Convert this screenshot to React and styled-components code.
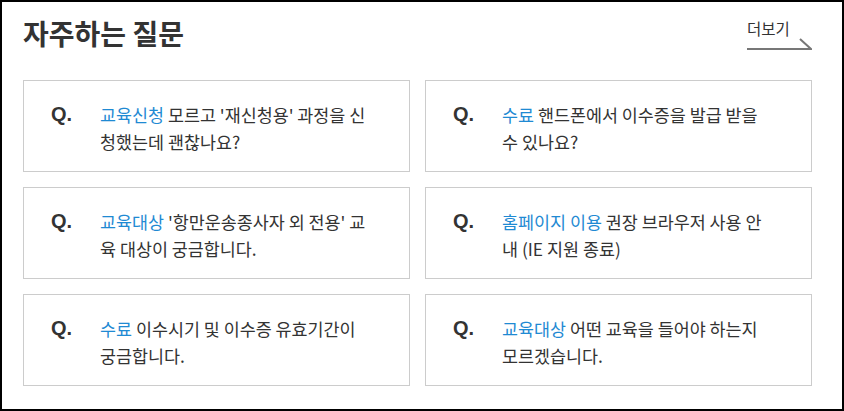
import React from 'react';
import styled, { createGlobalStyle } from 'styled-components';

const faqs = [
    { tag: '교육신청', first: "모르고 '재신청용' 과정을 신", second: '청했는데 괜찮나요?' },
    { tag: '수료', first: '핸드폰에서 이수증을 발급 받을', second: '수 있나요?' },
    { tag: '교육대상', first: "'항만운송종사자 외 전용' 교", second: '육 대상이 궁금합니다.' },
    { tag: '홈페이지 이용', first: '권장 브라우저 사용 안', second: '내 (IE 지원 종료)' },
    { tag: '수료', first: '이수시기 및 이수증 유효기간이', second: '궁금합니다.' },
    { tag: '교육대상', first: '어떤 교육을 들어야 하는지', second: '모르겠습니다.' },
];

const App = () => {
    return (
        <>
            <GlobalStyle />
            <Frame>
                <Header>
                    <Title>자주하는 질문</Title>
                    <MoreLink href="#">
                        <span>더보기</span>
                        <svg width="65" height="12" viewBox="0 0 65 12">
                            <polyline points="0,11 64,11 53,1" fill="none" stroke="#777" strokeWidth="2" />
                        </svg>
                    </MoreLink>
                </Header>

                <FaqGrid>
                    {faqs.map((f, i) => (
                        <FaqCard key={i}>
                            <QMark>Q.</QMark>
                            <Question>
                                <Tag>{f.tag}</Tag> {f.first}
                                <br />
                                {f.second}
                            </Question>
                        </FaqCard>
                    ))}
                </FaqGrid>
            </Frame>
        </>
    );
}

const GlobalStyle = createGlobalStyle`
    body{
        margin: 0;
        background: #fff;
        font-family: "Noto Sans CJK KR", "Noto Sans", sans-serif;
        color: #333;
    }
`;

const Frame = styled.div`
    width: 844px;
    height: 411px;
    box-sizing: border-box;
    border: 2px solid #000;
    padding: 12px 30px 0 21px;
`;

const Header = styled.div`
    height: 66px;
    display: flex;
    justify-content: space-between;
    align-items: flex-start;
`;

const Title = styled.h2`
    margin: 0;
    font-size: 28px;
    line-height: 38px;
    font-weight: 700;
    color: #333;
`;

const MoreLink = styled.a`
    margin-top: 5px;
    display: flex;
    flex-direction: column;
    text-decoration: none;
    color: #333;

    span{
        font-size: 15.5px;
        line-height: 18px;
    }
    svg{
        display: block;
        margin-top: 1px;
    }
`;

const FaqGrid = styled.div`
    display: grid;
    grid-template-columns: 1fr 1fr;
    grid-auto-rows: 92px;
    gap: 15px;
`;

const FaqCard = styled.div`
    box-sizing: border-box;
    border: 1px solid #ccc;
    display: flex;
    align-items: center;
    padding: 3px 20px 0 27px;
`;

const QMark = styled.span`
    flex: 0 0 49px;
    align-self: center;
    margin-top: -27px;
    font-family: "Liberation Sans", Arial, sans-serif;
    font-weight: 700;
    font-size: 20px;
    line-height: 27px;
    color: #333;
`;

const Question = styled.p`
    margin: 0;
    font-size: 17.4px;
    line-height: 27px;
    color: #333;
    white-space: nowrap;
`;

const Tag = styled.span`
    color: #1f8ad3;
`;

export default App;
